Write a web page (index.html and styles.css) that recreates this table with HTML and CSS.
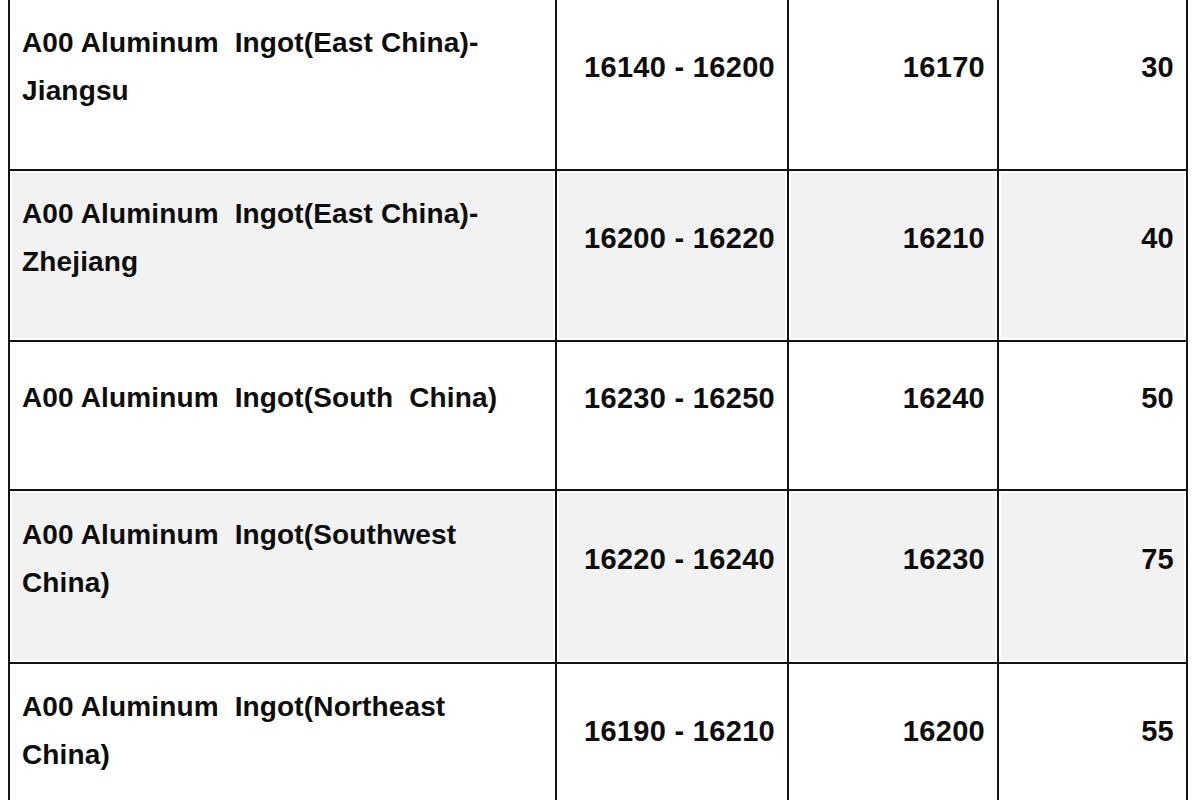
FILE: index.html
```html
<!DOCTYPE html>
<html>
<head>
<meta charset="utf-8">
<link rel="stylesheet" href="styles.css">
</head>
<body>
<table class="prices">
  <colgroup>
    <col class="c-name"><col class="c-range"><col class="c-avg"><col class="c-chg">
  </colgroup>
  <tbody>
    <tr class="r-tall">
      <td class="name">A00 Aluminum&nbsp; Ingot(East China)-Jiangsu</td>
      <td class="num">16140 - 16200</td>
      <td class="num">16170</td>
      <td class="num">30</td>
    </tr>
    <tr class="r-tall alt">
      <td class="name">A00 Aluminum&nbsp; Ingot(East China)-Zhejiang</td>
      <td class="num">16200 - 16220</td>
      <td class="num">16210</td>
      <td class="num">40</td>
    </tr>
    <tr class="r-short">
      <td class="name">A00 Aluminum&nbsp; Ingot(South&nbsp; China)</td>
      <td class="num">16230 - 16250</td>
      <td class="num">16240</td>
      <td class="num">50</td>
    </tr>
    <tr class="r-taller alt">
      <td class="name">A00 Aluminum&nbsp; Ingot(Southwest China)</td>
      <td class="num">16220 - 16240</td>
      <td class="num">16230</td>
      <td class="num">75</td>
    </tr>
    <tr class="r-tall">
      <td class="name">A00 Aluminum&nbsp; Ingot(Northeast China)</td>
      <td class="num">16190 - 16210</td>
      <td class="num">16200</td>
      <td class="num">55</td>
    </tr>
  </tbody>
</table>
</body>
</html>
```

FILE: styles.css
```css
html, body {
  margin: 0;
  padding: 0;
  background: #ffffff;
}

body {
  padding-left: 8px;
  overflow: hidden;
}

.prices {
  margin-top: -2px;
  width: 1178px;
  border-collapse: collapse;
  table-layout: fixed;
  font-family: "Liberation Sans", Arial, sans-serif;
  font-weight: bold;
  font-size: 28px;
  line-height: 48px;
  color: #0d0d0d;
}

.c-name { width: 547px; }
.c-range { width: 232px; }
.c-avg { width: 210px; }
.c-chg { width: 189px; }

.prices td {
  border: 2.5px solid #141414;
  padding: 0 12px 36px 12px;
  vertical-align: middle;
  box-sizing: border-box;
}

.prices .r-tall td { height: 171px; }
.prices .r-taller td { height: 173px; }
.prices .r-short td { height: 149px; }

.prices tr.alt td {
  background: #f2f2f2;
  box-shadow: inset 0 0 0 2px #ffffff;
}

.prices td.name {
  text-align: left;
  padding-right: 34px;
  letter-spacing: 0.15px;
}

.prices td.num {
  text-align: right;
  font-size: 29px;
  letter-spacing: 0.3px;
}
```
